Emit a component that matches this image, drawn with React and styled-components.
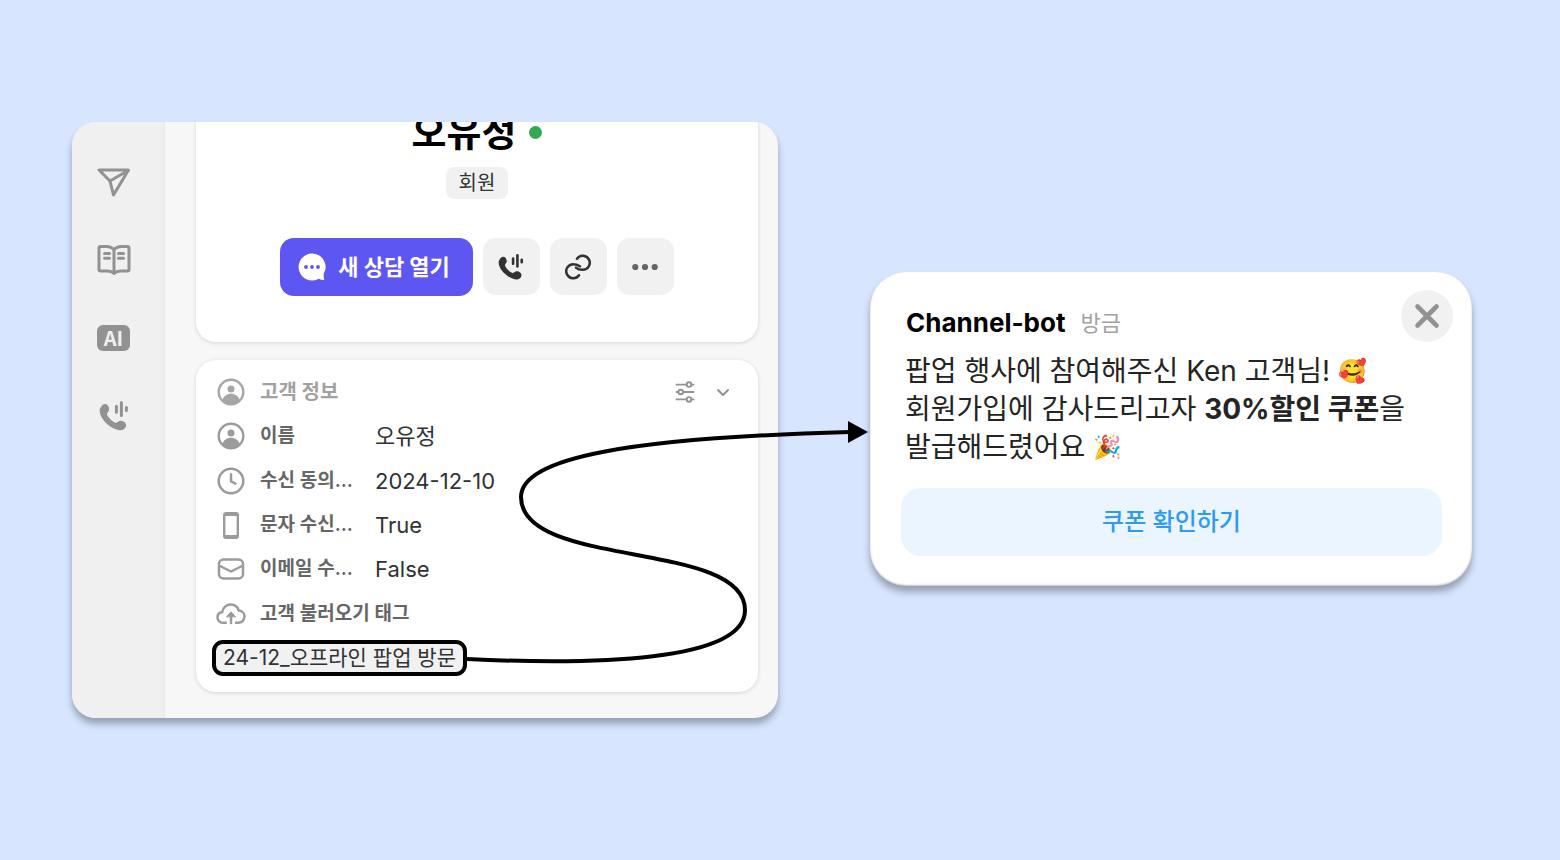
import React from 'react';
import styled, { createGlobalStyle } from 'styled-components';

const colors = {
  page: '#d7e5ff',
  sidebar: '#f0f0f0',
  content: '#f7f7f7',
  chip: '#f1f1f1',
  primary: '#5e56f0',
  link: '#2f9bed',
  linkBg: '#eaf5ff',
  dark: '#242424',
  text: '#303234',
  label: '#666666',
  muted: '#a1a1a1',
  icon: '#929292',
};

const GlobalStyle = createGlobalStyle`
  * {
    box-sizing: border-box;
  }

  body {
    margin: 0;
    background: ${colors.page};
    color: ${colors.dark};
    font-family: Inter, 'Noto Sans CJK KR', sans-serif;
  }

  button {
    border: 0;
    padding: 0;
    background: none;
    color: inherit;
    font-family: inherit;
    cursor: pointer;
  }

  svg {
    display: block;
    flex-shrink: 0;
  }

  h1, h2, p {
    margin: 0;
  }
`;

const Page = styled.main`
  min-height: 100vh;
  padding: 122px 88px 122px 72px;
`;

const Board = styled.div`
  position: relative;
  display: grid;
  grid-template-columns: minmax(0, 706fr) minmax(0, 602fr);
  gap: 92px;
  align-items: center;
`;

const Panel = styled.section`
  display: flex;
  border-radius: 24px;
  background: ${colors.content};
  box-shadow: 0 6px 7px rgba(0, 0, 0, 0.3);
  overflow: hidden;
`;

const Sidebar = styled.nav`
  display: flex;
  flex-direction: column;
  align-items: center;
  gap: 38px;
  width: 93px;
  padding: 40px 8px 0 0;
  background: ${colors.sidebar};
  border-right: 2px solid #ebebeb;
`;

const SidebarButton = styled.button`
  display: flex;
  align-items: center;
  justify-content: center;
  width: 40px;
  height: 40px;
  color: ${colors.icon};
`;

const AiBadge = styled.span`
  width: 33px;
  height: 26px;
  border-radius: 6px;
  background: ${colors.icon};
  color: ${colors.sidebar};
  font-family: 'Noto Sans CJK KR', sans-serif;
  font-size: 20px;
  font-weight: 700;
  line-height: 26px;
  text-align: center;
`;

const Content = styled.div`
  flex: 1;
  min-width: 0;
  display: flex;
  flex-direction: column;
  gap: 18px;
  padding: 0 20px 26px 31px;
`;

const Card = styled.div`
  background: white;
  border-radius: 20px;
  box-shadow: 0 1px 4px rgba(0, 0, 0, 0.14);
`;

const ProfileCard = styled(Card)`
  display: flex;
  flex-direction: column;
  align-items: center;
  padding-bottom: 46px;
  border-top-left-radius: 0;
  border-top-right-radius: 0;
`;

const NameRow = styled.div`
  display: flex;
  align-items: center;
  gap: 13px;
  margin-top: -18px;
`;

const Name = styled.h1`
  color: black;
  font-size: 38px;
  font-weight: 700;
  line-height: 56px;
`;

const OnlineDot = styled.span`
  width: 13px;
  height: 13px;
  border-radius: 50%;
  background: #34a853;
`;

const MemberChip = styled.span`
  margin-top: 7px;
  padding: 0 13px;
  border-radius: 8px;
  background: ${colors.chip};
  color: ${colors.text};
  font-size: 20px;
  line-height: 32px;
`;

const Actions = styled.div`
  display: flex;
  gap: 10px;
  margin-top: 39px;
`;

const PrimaryButton = styled.button`
  display: flex;
  align-items: center;
  gap: 12px;
  height: 58px;
  padding: 0 23px 0 18px;
  border-radius: 14px;
  background: ${colors.primary};
  color: white;
  font-size: 22px;
  font-weight: 700;
  line-height: 28px;
`;

const SquareButton = styled.button`
  display: flex;
  align-items: center;
  justify-content: center;
  width: 57px;
  height: 57px;
  border-radius: 13px;
  background: ${colors.chip};
  color: ${props => props.$soft ? '#626466' : colors.text};
`;

const InfoCard = styled(Card)`
  padding: 10px 16px 16px;
`;

const InfoList = styled.div`
  display: grid;
  grid-template-rows: repeat(6, 1fr);
  height: 266px;
  padding-left: 4px;
`;

const InfoRow = styled.div`
  display: flex;
  align-items: center;
  color: ${props => props.$muted ? '#a6a6a6' : '#9b9b9b'};
  line-height: 28px;
`;

const IconSlot = styled.span`
  display: flex;
  justify-content: center;
  width: 30px;
  margin-right: 14px;
`;

const InfoTitle = styled.h2`
  flex: 1;
  color: ${colors.muted};
  font-size: 20px;
  font-weight: 700;
`;

const InfoLabel = styled.span`
  width: ${props => props.$wide ? 'auto' : '115px'};
  color: ${colors.label};
  font-size: 19px;
  font-weight: 600;
  white-space: nowrap;
`;

const InfoValue = styled.span`
  color: ${colors.text};
  font-size: 22px;
`;

const InfoTools = styled.div`
  display: flex;
  align-items: center;
  gap: 20px;
  padding-right: 11px;
  color: ${colors.icon};
`;

const Tag = styled.span`
  display: inline-block;
  margin-top: 4px;
  padding: 0 7px;
  border: 4px solid black;
  border-radius: 11px;
  background: ${colors.chip};
  color: ${colors.text};
  font-size: 21px;
  line-height: 28px;
  white-space: nowrap;
`;

const Popup = styled.section`
  margin-top: 18px;
  padding: 18px 19px 30px 31px;
  border-radius: 36px;
  background: white;
  box-shadow: inset 0 -1px 2px rgba(0, 0, 0, 0.24), 0 6px 7px rgba(0, 0, 0, 0.3);
`;

const PopupHeader = styled.header`
  display: flex;
  justify-content: space-between;
`;

const Sender = styled.div`
  display: flex;
  align-items: flex-start;
  gap: 15px;
  padding: 17px 0 0 5px;
  line-height: 32px;

  h2 {
    color: black;
    font-size: 26px;
    font-weight: 700;
  }

  time {
    color: ${colors.muted};
    font-size: 22px;
  }
`;

const CloseButton = styled.button`
  display: flex;
  align-items: center;
  justify-content: center;
  width: 52px;
  height: 52px;
  border-radius: 50%;
  background: ${colors.chip};
  color: ${colors.icon};
`;

const Message = styled.p`
  margin-top: 10px;
  padding-left: 4px;
  font-size: 28px;
  line-height: 38px;
`;

const Emoji = styled.span`
  font-size: 23px;
  line-height: 1;
  vertical-align: 2px;
`;

const CouponButton = styled.button`
  display: block;
  width: calc(100% - 11px);
  height: 68px;
  margin-top: 22px;
  border-radius: 20px;
  background: ${colors.linkBg};
  color: ${colors.link};
  font-size: 24px;
  font-weight: 500;
  line-height: 32px;
`;

const Connector = styled.svg`
  position: absolute;
  top: 0;
  left: 0;
  width: 100%;
  height: 100%;
  overflow: visible;
  pointer-events: none;
`;

const SendIcon = () => (
  <svg width="34" height="30" viewBox="0 0 34 30" fill="none" stroke="currentColor" strokeWidth="3" strokeLinejoin="round">
    <path d="M2 3H31.5L16.5 28L13 14Z M13 14L31 3.5" />
  </svg>
);

const BookIcon = () => (
  <svg width="34" height="32" viewBox="0 0 34 32" fill="none" stroke="currentColor" strokeWidth="3" strokeLinejoin="round" strokeLinecap="round">
    <path d="M17 6C15 3.4 12.5 2.6 9.5 2.6H3.5Q2 2.6 2 4.1V25.5Q2 27 3.5 27H10C13 27 15.2 27.6 17 29.4C18.8 27.6 21 27 24 27H30.5Q32 27 32 25.5V4.1Q32 2.6 30.5 2.6H24.5C21.5 2.6 19 3.4 17 6V29" />
    <path d="M7.5 9.4H12.5M7.5 14.2H12.5M21.5 9.4H26.5M21.5 14.2H26.5" />
  </svg>
);

const CallIcon = ({ size = 30 }) => (
  <svg width={size} height={size} viewBox="0 0 30 30" fill="currentColor">
    <path d="M2 6C3 4.2 4.4 3.1 6 3.1C8.2 3.1 10 5.4 10.1 8C10.2 10.2 8.4 11.3 7.9 13C9.2 16.7 13 20.6 16.8 22C18.6 21.4 19.5 19.8 21.6 19.8C24.7 19.9 27.1 21.8 27.1 24.1C27.1 26.7 25 29.3 21.5 29.3C14 29.3 .8 19.5 .7 9.5C.7 8.2 1.2 7.2 2 6Z" />
    <path d="M17.4 5.2V11.2M22.4 1.5V14.5M27.4 6.6V9.4" stroke="currentColor" strokeWidth="3" strokeLinecap="round" />
  </svg>
);

const ChatIcon = () => (
  <svg width="28" height="28" viewBox="0 0 28 28">
    <path fill="white" d="M14 .5A13.5 13.5 0 1 0 20.8 25.7Q23.5 27.3 26.3 27Q25.5 24.5 25.7 20.8A13.5 13.5 0 0 0 14 .5Z" />
    <g fill={colors.primary}>
      <circle cx="8" cy="14" r="1.9" />
      <circle cx="14" cy="14" r="1.9" />
      <circle cx="20" cy="14" r="1.9" />
    </g>
  </svg>
);

const LinkIcon = () => (
  <svg width="26" height="26" viewBox="0 0 26 26" fill="none" stroke="currentColor" strokeWidth="2.5" strokeLinecap="round">
    <path d="M12 4.8A7 7 0 1 1 17.5 15.8C15 15.8 12.500 15 11 13.6" />
    <path d="M14 21.2A7 7 0 1 1 8.5 10.2C11 10.2 13.500 11 15 12.4" />
  </svg>
);

const MoreIcon = () => (
  <svg width="28" height="8" viewBox="0 0 28 8" fill="currentColor">
    <circle cx="4.3" cy="4" r="3.1" />
    <circle cx="14" cy="4" r="3.1" />
    <circle cx="23.7" cy="4" r="3.1" />
  </svg>
);

const UserIcon = () => (
  <svg width="28" height="28" viewBox="0 0 28 28">
    <circle cx="14" cy="14" r="12.3" fill="none" stroke="currentColor" strokeWidth="2.4" />
    <circle cx="14" cy="11" r="3.5" fill="currentColor" />
    <path fill="currentColor" d="M5.2 22C6.5 18 10 15.7 14 15.7S21.5 18 22.8 22A12 12 0 0 1 5.2 22Z" />
  </svg>
);

const ClockIcon = () => (
  <svg width="28" height="28" viewBox="0 0 28 28" fill="none" stroke="currentColor" strokeWidth="2.5" strokeLinecap="round" strokeLinejoin="round">
    <circle cx="14" cy="14" r="12.3" />
    <path d="M14 7.3V14.3L18.4 16.6" />
  </svg>
);

const MobileIcon = () => (
  <svg width="16" height="27" viewBox="0 0 16 27" fill="currentColor" fillRule="evenodd">
    <path d="M3 0H13Q16 0 16 3V24Q16 27 13 27H3Q0 27 0 24V3Q0 0 3 0ZM2.4 4V23H13.6V4Z" />
  </svg>
);

const MailIcon = () => (
  <svg width="28" height="24" viewBox="0 0 28 24" fill="none" stroke="currentColor" strokeWidth="2.5" strokeLinejoin="round">
    <rect x="2" y="2.5" width="24" height="19" rx="4.5" />
    <path d="M2 8.5L14 14.5L26 8.5" />
  </svg>
);

const CloudIcon = () => (
  <svg width="30" height="22" viewBox="0 0 30 22" fill="none" stroke="currentColor" strokeWidth="2.5" strokeLinecap="round">
    <path d="M9.8 19.8H7.5C4 19.8 1.5 17.5 1.5 14.4C1.5 11.6 3.5 9.4 6.3 9C6.9 4.7 10.4 1.6 14.6 1.6C18.6 1.6 21.7 4.2 22.9 7.6C26.2 7.8 28.5 10.4 28.5 13.6C28.5 17.1 25.8 19.8 22.2 19.8H20" />
    <path d="M15 12V20" />
    <path d="M10.7 13.6L15 8.8L19.3 13.6Z" fill="currentColor" strokeWidth="1" strokeLinejoin="round" />
  </svg>
);

const SlidersIcon = () => (
  <svg width="20" height="22" viewBox="0 0 20 22" fill="white" stroke="currentColor" strokeWidth="1.9" strokeLinecap="round">
    <path d="M1.5 3.6H18.5M1.5 11H18.5M1.5 18.4H18.5" />
    <circle cx="14" cy="3.6" r="2.3" />
    <circle cx="5.7" cy="11" r="2.3" />
    <circle cx="14" cy="18.4" r="2.3" />
  </svg>
);

const ChevronIcon = () => (
  <svg width="16" height="10" viewBox="0 0 16 10" fill="none" stroke="currentColor" strokeWidth="2" strokeLinecap="round" strokeLinejoin="round">
    <path d="M3 3L8 8L13 3" />
  </svg>
);

const CloseIcon = () => (
  <svg width="26" height="26" viewBox="0 0 26 26" fill="none" stroke="currentColor" strokeWidth="4.6" strokeLinecap="round">
    <path d="M3.5 3.5L22.5 22.5M22.5 3.5L3.5 22.5" />
  </svg>
);

const menu = [
  { name: '메시지', icon: <SendIcon /> },
  { name: '문서', icon: <BookIcon /> },
  { name: 'AI', icon: <AiBadge>AI</AiBadge> },
  { name: '전화', icon: <CallIcon /> },
];

const customerInfo = [
  { label: '이름', value: '오유정', icon: <UserIcon /> },
  { label: '수신 동의...', value: '2024-12-10', icon: <ClockIcon /> },
  { label: '문자 수신...', value: 'True', icon: <MobileIcon /> },
  { label: '이메일 수...', value: 'False', icon: <MailIcon /> },
  { label: '고객 불러오기 태그', icon: <CloudIcon /> },
];

const CustomerPanel = () => (
  <Panel>
    <Sidebar>
      {menu.map(item => (
        <SidebarButton key={item.name} type="button" aria-label={item.name}>
          {item.icon}
        </SidebarButton>
      ))}
    </Sidebar>

    <Content>
      <ProfileCard>
        <NameRow>
          <Name>오유정</Name>
          <OnlineDot />
        </NameRow>
        <MemberChip>회원</MemberChip>
        <Actions>
          <PrimaryButton type="button">
            <ChatIcon />
            새 상담 열기
          </PrimaryButton>
          <SquareButton type="button" aria-label="전화">
            <CallIcon size={26} />
          </SquareButton>
          <SquareButton type="button" aria-label="링크">
            <LinkIcon />
          </SquareButton>
          <SquareButton type="button" aria-label="더보기" $soft>
            <MoreIcon />
          </SquareButton>
        </Actions>
      </ProfileCard>

      <InfoCard>
        <InfoList>
          <InfoRow $muted>
            <IconSlot><UserIcon /></IconSlot>
            <InfoTitle>고객 정보</InfoTitle>
            <InfoTools>
              <button type="button" aria-label="설정"><SlidersIcon /></button>
              <button type="button" aria-label="접기"><ChevronIcon /></button>
            </InfoTools>
          </InfoRow>
          {customerInfo.map(info => (
            <InfoRow key={info.label}>
              <IconSlot>{info.icon}</IconSlot>
              <InfoLabel $wide={!info.value}>{info.label}</InfoLabel>
              {info.value && <InfoValue>{info.value}</InfoValue>}
            </InfoRow>
          ))}
        </InfoList>
        <Tag>24-12_오프라인 팝업 방문</Tag>
      </InfoCard>
    </Content>
  </Panel>
);

const CouponPopup = () => (
  <Popup>
    <PopupHeader>
      <Sender>
        <h2>Channel-bot</h2>
        <time>방금</time>
      </Sender>
      <CloseButton type="button" aria-label="닫기">
        <CloseIcon />
      </CloseButton>
    </PopupHeader>
    <Message>
      팝업 행사에 참여해주신 Ken 고객님! <Emoji>🥰</Emoji><br />
      회원가입에 감사드리고자 <b>30%할인 쿠폰</b>을<br />
      발급해드렸어요 <Emoji>🎉</Emoji>
    </Message>
    <CouponButton type="button">쿠폰 확인하기</CouponButton>
  </Popup>
);

const App = () => (
  <>
    <GlobalStyle />
    <Page>
      <Board>
        <CustomerPanel />
        <CouponPopup />
        <Connector viewBox="0 0 1400 596" preserveAspectRatio="none" aria-hidden="true">
          <path
            d="M395 537C520 543 673 540 673 488C673 418 449 447 449 375C449 335 560 316 778 310"
            fill="none"
            stroke="black"
            strokeWidth="4"
          />
          <path d="M776 299L796 310L776 321Z" />
        </Connector>
      </Board>
    </Page>
  </>
);

export default App;
